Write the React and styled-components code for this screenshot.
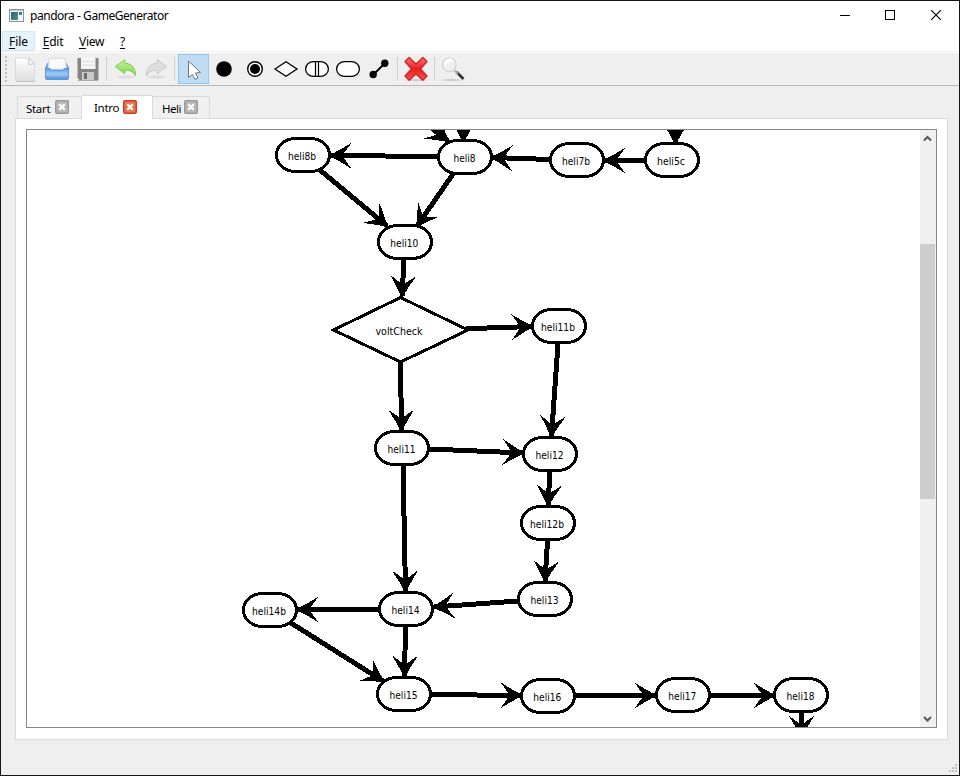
import React from "react";
import styled, { createGlobalStyle } from "styled-components";

const GlobalStyle = createGlobalStyle`
  * { box-sizing: border-box; }
  body { margin: 0; overflow: hidden; }
`;

const Window = styled.div`
  width: 960px;
  height: 776px;
  display: flex;
  flex-direction: column;
  border: 1px solid #151518;
  background: #efefef;
  color: #000;
  font-family: "Noto Sans", "Open Sans", sans-serif;
  font-size: 12px;
`;

const TitleBar = styled.header`
  display: flex;
  align-items: center;
  height: 30px;
  padding-left: 8px;
  background: #fff;
`;

const AppIcon = styled.svg`
  display: block;
  margin-top: -2px;
`;

const Title = styled.span`
  flex: 1;
  padding-left: 6px;
  line-height: 28px;
  letter-spacing: -0.46px;
`;

const WindowButton = styled.button`
  width: 46px;
  height: 30px;
  padding: 0 0 2px;
  border: 0;
  background: transparent;
  display: flex;
  align-items: center;
  justify-content: center;
`;

const MenuBar = styled.nav`
  display: flex;
  height: 20px;
  padding-left: 1px;
  background: #fff;
`;

const MenuItem = styled.span`
  width: ${(p) => p.$width}px;
  height: 20px;
  line-height: 20px;
  text-align: center;
  letter-spacing: ${(p) => p.$spacing || 0}px;
  border: 1px solid ${(p) => (p.$active ? "#cce8ff" : "transparent")};
  background: ${(p) => (p.$active ? "#e5f3ff" : "transparent")};
`;

const Mnemonic = styled.span`
  text-decoration: underline;
  text-underline-offset: 2px;
`;

const ToolBar = styled.div`
  display: flex;
  align-items: center;
  height: 35px;
  border-top: 1px solid #f0f0f0;
  border-bottom: 1px solid #b7b7b7;
  box-shadow: inset 0 1px #fff;
  padding: 1px 0 0 4px;
`;

const Grip = styled.span`
  width: 2px;
  height: 26px;
  margin-right: 3px;
  background: repeating-linear-gradient(#bdbdbd 0 2px, transparent 2px 4px);
`;

const ToolButton = styled.button`
  width: 31px;
  height: 30px;
  padding: 0;
  border: 0;
  background: ${(p) => (p.$selected ? "#c0dcf3" : "transparent")};
  box-shadow: ${(p) => (p.$selected ? "inset 0 0 0 1px #90c8f6" : "none")};
  svg { display: block; }
`;

const Separator = styled.span`
  width: 1px;
  height: 24px;
  margin: 0 3px 0 ${(p) => p.$before ?? 3}px;
  background: #cfcfcf;
`;

const Content = styled.main`
  flex: 1;
  display: flex;
  flex-direction: column;
  padding: 9px 11px 35px 14px;
`;

const TabBar = styled.div`
  display: flex;
  align-items: flex-end;
  height: 24px;
  padding-left: 2px;
  margin-bottom: -1px;
  z-index: 1;
`;

const Tab = styled.div`
  display: flex;
  align-items: center;
  justify-content: space-between;
  width: ${(p) => p.$width}px;
  height: ${(p) => (p.$active ? 24 : 22)}px;
  margin-bottom: ${(p) => (p.$active ? 0 : 1)}px;
  padding: ${(p) => (p.$active ? 0 : 1)}px ${(p) => p.$right}px 0 ${(p) => p.$left}px;
  border: 1px solid #d9d9d9;
  border-bottom: 0;
  border-left-width: ${(p) => (p.$joined ? 0 : 1)}px;
  background: ${(p) => (p.$active ? "#fff" : "#f0f0f0")};
  font-size: 11.5px;
  letter-spacing: ${(p) => p.$spacing || 0}px;
`;

const TabClose = styled.svg`
  display: block;
  flex: none;
  margin-top: -2px;
`;

const TabPane = styled.section`
  flex: 1;
  border: 1px solid #d9d9d9;
  background: #fff;
  padding: 10px;
`;

const Viewport = styled.div`
  width: 911px;
  height: 599px;
  display: flex;
  border: 1px solid #828790;
`;

const Diagram = styled.svg`
  display: block;
  width: 893px;
  height: 597px;
  font-family: "DejaVu Sans Condensed", "DejaVu Sans", sans-serif;
  font-size: 11px;
`;

const ScrollBar = styled.div`
  width: 16px;
  display: flex;
  flex-direction: column;
  align-items: stretch;
  background: #f0f0f0;
`;

const ScrollThumb = styled.div`
  height: 255px;
  margin: 97px 1px auto 0;
  background: #cdcdcd;
`;

const StatusGrip = styled.svg`
  display: block;
  align-self: flex-end;
  margin: -11px 2px 3px 0;
`;

function Menu({ label, ...rest }) {
  return (
    <MenuItem {...rest}>
      <Mnemonic>{label[0]}</Mnemonic>
      {label.slice(1)}
    </MenuItem>
  );
}

/* Tool icons share a strip coordinate system; x is the left edge of the button. */
function Tool({ x, selected, label, children }) {
  return (
    <ToolButton $selected={selected} aria-label={label}>
      <svg width="31" height="30" viewBox={`${x} 54 31 30`}>{children}</svg>
    </ToolButton>
  );
}

function CloseIcon({ active }) {
  return (
    <TabClose width="14" height="14" viewBox="0 0 14 14">
      <rect x=".75" y=".75" width="12.5" height="12.5" rx="1.2" fill={active ? "#e07850" : "#b9b9b9"} stroke={active ? "#d63b22" : "#999"} strokeWidth="1.5" />
      <path d="M4.3 4.3l5.4 5.4M9.7 4.3l-5.4 5.4" stroke="#fff" strokeWidth="2.2" />
    </TabClose>
  );
}

const ARROW_PATH = "M114.3 66.5L123.7 59.8V63.2C130 63.4 134.5 67.5 134.7 75.8C131.5 71 128.5 70 123.7 70.2V73.6Z";

const nodes = [
  ["heli8b", 303, 155, 302, 28], ["heli8", 465, 157, 464.5, 22], ["heli7b", 577, 160, 576, 28],
  ["heli5c", 672, 160, 671, 28], ["heli10", 405, 242, 404.3, 28], ["heli11b", 559, 326, 558, 34],
  ["heli11", 402, 448, 401.5, 28], ["heli12", 550, 454, 549.5, 28], ["heli12b", 548, 523, 547, 34],
  ["heli13", 545, 599, 544.5, 28], ["heli14b", 270, 610, 269, 34], ["heli14", 406, 609, 405.5, 28],
  ["heli15", 404, 694, 403.5, 28], ["heli16", 548, 696, 547.3, 28], ["heli17", 683, 695, 682.3, 28],
  ["heli18", 801, 695, 800.5, 28],
];

const edges = [
  [438, 156.5, 331, 155.5], [550, 159.5, 492, 157.5], [645, 160.5, 605, 160.5],
  [320, 170, 387, 226], [453, 174, 417, 226], [404, 260, 402, 296],
  [466, 328.7, 532, 326.5], [558, 344, 551.5, 436], [550, 472, 548, 505],
  [547.5, 541, 545, 581], [400.5, 363, 401.5, 430], [430, 449, 523, 453],
  [403, 465, 405.5, 591], [378, 609.5, 298, 609.5], [291, 623, 383, 681],
  [405.5, 627, 404.5, 676], [518, 601, 434, 607], [432, 694.5, 521, 695.5],
  [576, 695.5, 655, 695.5], [711, 695.5, 774, 695.5], [801.5, 713, 801.5, 736],
  [463.5, 115, 463.5, 141], [420, 119, 448, 141], [675.5, 115, 675.5, 143],
];

function Edge({ line: [x1, y1, x2, y2] }) {
  const angle = (Math.atan2(y2 - y1, x2 - x1) * 180) / Math.PI;
  return (
    <g>
      <path d={`M${x1} ${y1}L${x2} ${y2}`} stroke="#000" strokeWidth="5" />
      <path d="M2 0L-9 -6L-20.5 -13L-13 -2.5V2.5L-20.5 13L-9 6Z" transform={`translate(${x2} ${y2}) rotate(${angle})`} />
    </g>
  );
}

function Flowchart() {
  return (
    <Diagram viewBox="27 130 893 597">
      <g shapeRendering="crispEdges">
        {edges.map((line, i) => <Edge key={i} line={line} />)}
        <g fill="#fff" stroke="#000" strokeWidth="3">
          {nodes.map(([name, x, y]) => (
            <rect key={name} x={x - 26.5} y={y - 16.5} width="53" height="33" rx="19" ry="16.5" />
          ))}
          <path d="M333.5 330L400.5 297.5L468 330L400.5 362Z" />
        </g>
      </g>
      <g textAnchor="middle">
        {nodes.map(([name, , y, tx, width]) => (
          <text key={name} x={tx} y={y + 5} textLength={width} lengthAdjust="spacingAndGlyphs">{name}</text>
        ))}
        <text x="399" y="335" textLength="47" lengthAdjust="spacingAndGlyphs">voltCheck</text>
      </g>
    </Diagram>
  );
}

function Tools() {
  return (
    <ToolBar>
      <Grip />
      <Tool x={10} label="New">
        <defs>
          <linearGradient id="page" x2="0" y2="1"><stop stopColor="#fff" /><stop offset="1" stopColor="#dedede" /></linearGradient>
        </defs>
        <path d="M16 81.5H35" stroke="#c4c4c4" />
        <path d="M15.5 58H29L34.5 64V80.5H15.5Z" fill="url(#page)" stroke="#d9d9d9" />
        <path d="M29 58L28.5 64.5L34.5 64Z" fill="#f6f6f6" stroke="#c9c9c9" />
      </Tool>
      <Tool x={41} label="Open">
        <defs>
          <linearGradient id="tray" x2="0" y2="1"><stop stopColor="#5b9cdf" /><stop offset=".5" stopColor="#a2cbf5" /><stop offset="1" stopColor="#4c8cd9" /></linearGradient>
        </defs>
        <path d="M48 63H66L69 69H45Z" fill="#79aee8" stroke="#4f8fd8" />
        <path d="M49.5 58.5H65L66.5 69H48Z" fill="#fafafa" stroke="#dedede" />
        <path d="M45.5 68.5H50L51.5 70.5H62.5L64 68.5H68.5V78Q68.5 79.5 67 79.5H47Q45.5 79.5 45.5 78Z" fill="url(#tray)" stroke="#5b97de" />
      </Tool>
      <Tool x={72} label="Save">
        <path d="M77.5 58H98.5V80H79.5L77.5 78Z" fill="#858585" />
        <path d="M81 58H95.5V69H81Z" fill="#f5f5f5" />
        <path d="M82 61.5H95M82 65H95" stroke="#dddddd" />
        <path d="M82 72H94V80H82Z" fill="#c9c9c9" />
        <path d="M84 73H87V79H84Z" fill="#6c6c6c" />
        <path d="M78 80.5H98" stroke="#aaa" />
      </Tool>
      <Separator />
      <Tool x={109} label="Undo">
        <defs>
          <linearGradient id="undo" x2="0" y2="1"><stop stopColor="#c9f096" /><stop offset="1" stopColor="#82d552" /></linearGradient>
        </defs>
        <ellipse cx="125" cy="77" rx="9" ry="1.5" fill="#dedede" />
        <path d={ARROW_PATH} fill="url(#undo)" stroke="#79cf4c" strokeLinejoin="round" />
      </Tool>
      <Tool x={141} label="Redo">
        <ellipse cx="156" cy="77" rx="9" ry="1.5" fill="#dadada" />
        <path d={ARROW_PATH} transform="matrix(-1 0 0 1 281 0)" fill="#dedede" stroke="#c6c6c6" strokeLinejoin="round" />
      </Tool>
      <Separator $before={2} />
      <Tool x={178} selected label="Select">
        <path d="M188.5 61L200.5 72.5L195.5 73L198 78L195 79.5L192.5 74.5L188.5 77.5Z" fill="#fff" stroke="#6f7479" />
      </Tool>
      <Tool x={209} label="Start node"><circle cx="224" cy="69" r="7.8" /></Tool>
      <Tool x={240} label="End node">
        <circle cx="255" cy="69" r="7.3" fill="#fff" stroke="#000" strokeWidth="1.4" /><circle cx="255" cy="69" r="5" />
      </Tool>
      <Tool x={271} label="Decision"><path d="M275 69L286 61.8L297 69L286 76.2Z" fill="#fff" stroke="#000" strokeWidth="1.3" /></Tool>
      <Tool x={302} label="Subprocess">
        <rect x="305.6" y="61.6" width="22.8" height="14.8" rx="8" ry="7.4" fill="#fff" stroke="#000" strokeWidth="1.3" />
        <path d="M315.5 62V76M318.5 62V76" stroke="#000" strokeWidth="1.2" />
      </Tool>
      <Tool x={333} label="Process"><rect x="336.6" y="61.6" width="22.8" height="14.8" rx="8" ry="7.4" fill="#fff" stroke="#000" strokeWidth="1.3" /></Tool>
      <Tool x={364} label="Connection">
        <path d="M373 75L385 63" stroke="#000" strokeWidth="1.8" /><circle cx="373.2" cy="74.5" r="3.7" /><circle cx="384.8" cy="63.3" r="3.7" />
      </Tool>
      <Separator $before={2} />
      <Tool x={401} label="Delete">
        <defs>
          <linearGradient id="cross" x2="0" y2="1"><stop stopColor="#ff7770" /><stop offset=".5" stopColor="#e81f1f" /><stop offset="1" stopColor="#ee5a55" /></linearGradient>
        </defs>
        <ellipse cx="416" cy="80" rx="11" ry="1.2" fill="#d9caca" />
        <path d="M405 61.5L409.2 57.5L416 64L422.8 57.5L427 61.5L420.5 69L427 76L422.8 80.3L416 74L409.2 80.3L405 76L411.5 69Z" fill="url(#cross)" stroke="#cf2422" strokeWidth="1.3" strokeLinejoin="round" />
      </Tool>
      <Separator $before={2} />
      <Tool x={438} label="Find">
        <ellipse cx="452" cy="80" rx="10" ry="1.2" fill="#cecece" />
        <path d="M456.5 72L463.5 79" stroke="#333" strokeWidth="2.6" />
        <path d="M454.5 70.5L458 74" stroke="#aaa" strokeWidth="2" />
        <circle cx="449.3" cy="64.8" r="6.8" fill="#f0f0f0" stroke="#d0d0d0" strokeWidth="1.2" />
        <path d="M444 65A5.5 5.5 0 0 1 454 61Q449 62 444 65Z" fill="#fff" />
      </Tool>
    </ToolBar>
  );
}

export default function App() {
  return (
    <>
      <GlobalStyle />
      <Window>
        <TitleBar>
          <AppIcon width="15" height="13" viewBox="0 0 15 13">
            <defs><linearGradient id="app" x2="1" y2="1"><stop stopColor="#285b79" /><stop offset="1" stopColor="#4d9c79" /></linearGradient></defs>
            <rect x=".5" y=".5" width="14" height="12" fill="#f5f5f5" stroke="#8b9299" />
            <path d="M1 1.5H14" stroke="#c2c7cb" />
            <rect x="2" y="3" width="7" height="8" fill="url(#app)" />
            <rect x="10" y="3" width="3" height="3" fill="#3c7c89" />
          </AppIcon>
          <Title>pandora - GameGenerator</Title>
          <WindowButton aria-label="Minimize"><svg width="12" height="10"><path d="M2 5.5H12" stroke="#000" /></svg></WindowButton>
          <WindowButton aria-label="Maximize"><svg width="10" height="10"><rect x=".5" y=".5" width="9" height="9" fill="none" stroke="#000" /></svg></WindowButton>
          <WindowButton aria-label="Close"><svg width="10" height="10"><path d="M0 0L10 10M10 0L0 10" stroke="#000" strokeWidth="1.1" /></svg></WindowButton>
        </TitleBar>
        <MenuBar>
          <Menu label="File" $width={33} $active />
          <Menu label="Edit" $width={36} $spacing={-0.2} />
          <Menu label="View" $width={41} $spacing={-0.3} />
          <Menu label="?" $width={21} />
        </MenuBar>
        <Tools />
        <Content>
          <TabBar>
            <Tab $width={65} $left={8} $right={12} $spacing={-0.3}>Start<CloseIcon /></Tab>
            <Tab $width={71} $left={12} $right={15} $spacing={-0.3} $active $joined>Intro<CloseIcon active /></Tab>
            <Tab $width={57} $left={9} $right={11} $spacing={-0.5} $joined>Heli<CloseIcon /></Tab>
          </TabBar>
          <TabPane>
            <Viewport>
              <Flowchart />
              <ScrollBar>
                <svg width="15" height="17"><path d="M4 10.5L7.5 7L11 10.5" fill="none" stroke="#555" strokeWidth="2" /></svg>
                <ScrollThumb />
                <svg width="15" height="17"><path d="M4 7L7.5 10.5L11 7" fill="none" stroke="#555" strokeWidth="2" /></svg>
              </ScrollBar>
            </Viewport>
          </TabPane>
        </Content>
        <StatusGrip width="8" height="8" fill="#bfbfbf">
          <path d="M6 0h2v2h-2zM3 3h2v2h-2zM6 3h2v2h-2zM0 6h2v2h-2zM3 6h2v2h-2zM6 6h2v2h-2z" />
        </StatusGrip>
      </Window>
    </>
  );
}
